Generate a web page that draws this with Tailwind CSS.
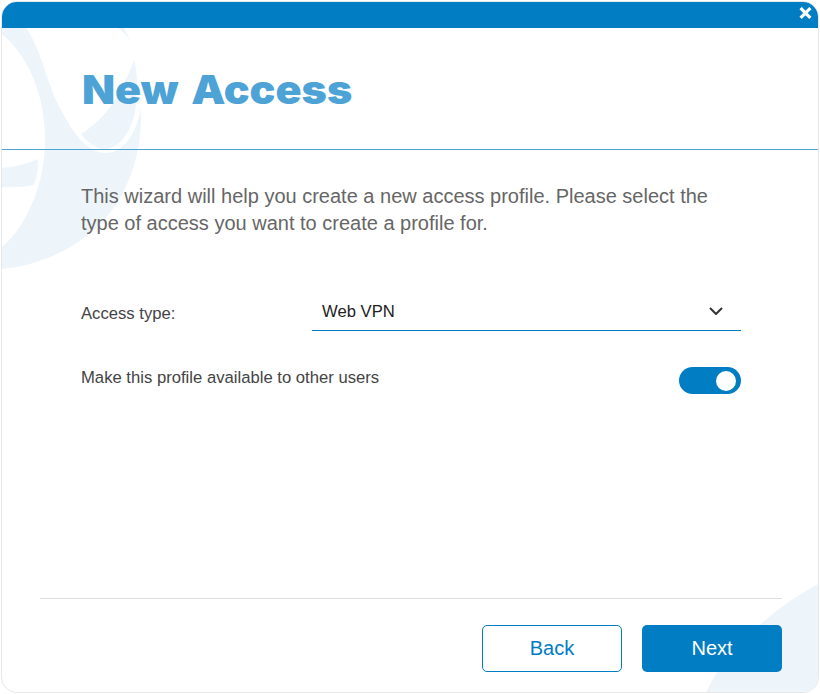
<!DOCTYPE html>
<html lang="en">
<head>
<meta charset="utf-8">
<title>New Access</title>
<script src="https://cdn.jsdelivr.net/npm/@tailwindcss/browser@4"></script>
</head>
<body class="bg-white font-['Liberation_Sans',Arial,sans-serif]">
<div class="w-[820px] h-[694px] pl-px pt-px overflow-hidden">
  <main class="relative isolate flex flex-col w-[818px] h-[692px] rounded-2xl border border-[#e8e8e8] overflow-hidden bg-white">
    <svg class="absolute left-0 top-0 -z-10" width="816" height="690" viewBox="2 2 816 690" fill="#edf5fb" aria-hidden="true">
      <path d="M2 28H26C42 50 47 85 60 108C72 131 86 153 106 153C124 153 137 132 141 108C142 150 132 180 115 206C91 241 50 264 2 269V247C29 224 45 180 45 140C45 98 31 59 2 34Z"/>
      <path d="M118 28H124L131 42Q126 34 118 28ZM134 60C139 78 137 99 135 112C130 135 118 148 106 149C95 149 87 142 81 134C108 117 122 92 134 60Z"/>
      <path d="M2 168Q22 166 38 159Q39 172 34 185Q18 188 2 187Z"/>
      <path d="M818 584C777 606 728 646 706 692H818Z"/>
    </svg>
    <div class="h-[26px] shrink-0 bg-[#007dc3] flex justify-end items-start pr-[6px] pt-[5px]">
      <button aria-label="Close"><svg width="13" height="13" viewBox="0 0 13 13" stroke="#fff" stroke-width="3.2" stroke-linecap="square"><path d="M2.7 2.2L10.3 9.8M10.3 2.2L2.7 9.8"/></svg></button>
    </div>
    <header class="h-[122px] shrink-0 border-b border-[#4da3d6] pl-[80px] pt-[38px]">
      <h1 class="origin-left scale-x-[1.075] text-[40px] leading-[48px] font-black text-[#4da3d6] whitespace-nowrap [word-spacing:4px] font-[Inter,sans-serif]">New Access</h1>
    </header>
    <section class="pl-[79px] pr-[77px] pt-[33px]">
      <p class="text-[20px] leading-[27px] text-[#666] whitespace-nowrap">This wizard will help you create a new access profile. Please select the<br>type of access you want to create a profile for.</p>
      <div class="mt-[54px] flex items-center">
        <span class="w-[231px] text-[16.67px] leading-6 text-[#444] pt-[5px]">Access type:</span>
        <div class="flex-1 h-[40px] border-b border-[#007dc3] flex items-center justify-between pl-[10px] pr-[18px] text-[16.67px] leading-6 text-[#222]">
          <span class="pt-[3px]">Web VPN</span>
          <svg width="14" height="8" viewBox="0 0 14 8" fill="none" stroke="#333" stroke-width="2"><path d="M1 1L7 7L13 1"/></svg>
        </div>
      </div>
      <div class="mt-[36px] flex items-start justify-between">
        <span class="pt-px text-[16.67px] leading-[20px] text-[#444]">Make this profile available to other users</span>
        <div class="w-[62px] h-[27px] rounded-full bg-[#007dc3] flex items-center justify-end pr-[5px]"><span class="size-5 rounded-full bg-white"></span></div>
      </div>
    </section>
    <footer class="mt-auto ml-[38px] mr-[36px] mb-[20px] border-t border-[#dedede] pt-[26px] flex justify-end gap-5 text-[20px]">
      <button class="w-[140px] h-[47px] pb-[2px] rounded-[5px] border border-[#007dc3] bg-white text-[#007dc3]">Back</button>
      <button class="w-[140px] h-[47px] pb-[2px] rounded-[5px] bg-[#007dc3] text-white">Next</button>
    </footer>
  </main>
</div>
</body>
</html>
